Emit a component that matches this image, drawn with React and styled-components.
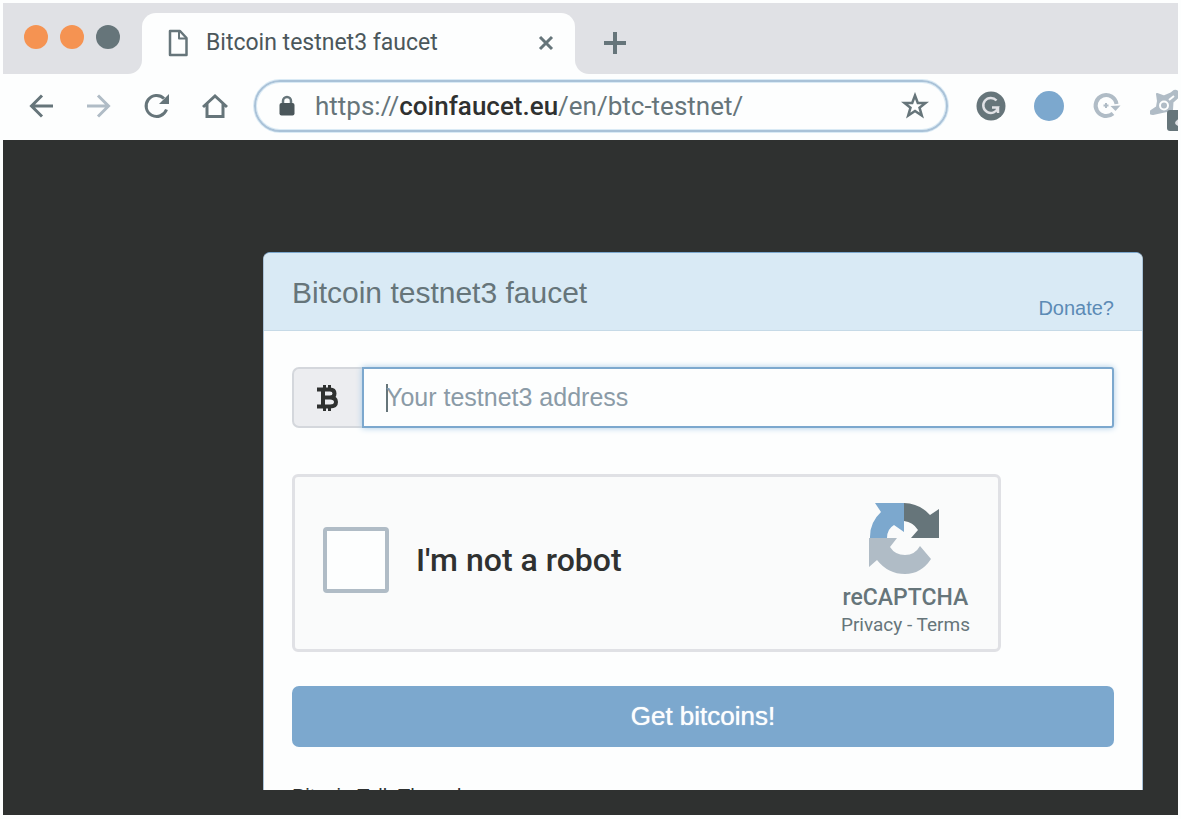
import React from 'react';
import styled, { createGlobalStyle } from 'styled-components';

const c = {
  white: '#fdfefe',
  strip: '#e0e1e5',
  dark: '#2f3130',
  slate: '#66757a',
  mist: '#b0bcc6',
  blue: '#7ca8ce',
  pale: '#d9eaf5',
  orange: '#f59352',
};

const Global = createGlobalStyle`
  *, *::before, *::after { box-sizing: border-box; }
  body { margin: 0; background: ${c.white}; font-family: "Liberation Sans", Arial, sans-serif; }
  button, input { font: inherit; }
  button { cursor: pointer; }
`;

const Browser = styled.div`
  margin: 3px;
  background: ${c.white};
  color: ${c.slate};
`;

const TabStrip = styled.div`
  display: flex;
  height: 71px;
`;

const WindowControls = styled.div`
  display: flex;
  gap: 12px;
  flex: none;
  width: 139px;
  padding: 22px 0 0 21px;
  background: ${c.strip};
  border-bottom-right-radius: 14px;
`;

const Light = styled.button`
  width: 24px;
  height: 24px;
  padding: 0;
  border: 0;
  border-radius: 50%;
  background: ${(p) => p.$color};
`;

const TabSlot = styled.div`
  flex: 0 1 433px;
  padding-top: 10px;
  background: linear-gradient(${c.strip} 40px, ${c.white} 40px);
`;

const Tab = styled.div`
  display: flex;
  align-items: center;
  height: 61px;
  padding: 0 18px 2px 25px;
  background: ${c.white};
  border-radius: 14px 14px 0 0;
`;

const TabTitle = styled.span`
  flex: 1;
  margin-left: 17px;
  white-space: nowrap;
  font: 400 23px/28px Roboto, sans-serif;
  color: #4b575b;
`;

const IconButton = styled.button`
  display: flex;
  align-items: center;
  justify-content: center;
  flex: none;
  width: ${(p) => p.$w || 58}px;
  height: 52px;
  padding: 0;
  border: 0;
  background: none;
  color: ${(p) => p.$color || c.slate};
`;

const StripRest = styled.div`
  flex: 1;
  display: flex;
  align-items: center;
  padding: 8px 0 0 20px;
  background: ${c.strip};
  border-bottom-left-radius: 14px;
`;

const Toolbar = styled.div`
  display: flex;
  align-items: center;
  height: 66px;
  padding: 0 0 2px 9px;
`;

const Nav = styled.nav`
  display: flex;
`;

const AddressBar = styled.div`
  flex: 1;
  display: flex;
  align-items: center;
  min-width: 0;
  height: 52px;
  margin: 0 14px 0 10px;
  padding: 0 12px 0 23px;
  border: 2px solid #a9c2d8;
  border-radius: 26px;
  box-shadow: inset 0 0 0 1px ${c.pale}, 0 0 0 1px ${c.pale};
`;

const Url = styled.span`
  flex: 1;
  margin-left: 20px;
  white-space: nowrap;
  font: 400 26px/32px Roboto, sans-serif;
  color: ${c.slate};

  b { font-weight: 500; color: ${c.dark}; }
`;

const Extensions = styled.div`
  display: flex;
  width: 216px;
  overflow: hidden;
`;

const Page = styled.main`
  padding: 112px 35px 25px 260px;
  background: ${c.dark};
`;

const Card = styled.section`
  background: ${c.white};
  border: 1px solid #a9c2d8;
  border-top-color: ${c.blue};
  border-bottom: 0;
  border-radius: 7px 7px 0 0;
  overflow: hidden;
`;

const CardHeader = styled.header`
  display: flex;
  justify-content: space-between;
  height: 78px;
  padding: 20px 28px 0;
  background: ${c.pale};
  border-bottom: 1px solid #c6dae7;
`;

const Title = styled.h1`
  margin: 0;
  font-size: 30px;
  line-height: 40px;
  font-weight: 400;
  color: ${c.slate};
`;

const Donate = styled.a`
  margin-top: 23px;
  font-size: 20px;
  line-height: 24px;
  color: #5c8bb5;
  text-decoration: none;
`;

const CardBody = styled.form`
  padding: 36px 28px 0;
`;

const AddressField = styled.div`
  display: flex;
  height: 61px;
`;

const Addon = styled.label`
  display: flex;
  align-items: center;
  justify-content: center;
  width: 70px;
  color: ${c.dark};
  background: #ecedf0;
  border: 2px solid #d4d7dc;
  border-right: 0;
  border-radius: 7px 0 0 7px;
`;

const AddressInput = styled.input`
  flex: 1;
  min-width: 0;
  padding: 0 22px;
  font-size: 25px;
  color: ${c.slate};
  background: linear-gradient(${c.slate}, ${c.slate}) 22px center / 2px 28px no-repeat ${c.white};
  border: 2px solid ${c.blue};
  border-radius: 0 3px 3px 0;
  box-shadow: 0 0 6px #a9cbe6;
  outline: 0;

  &:not(:placeholder-shown) { background-image: none; }
  &::placeholder { color: #8b9ba7; opacity: 1; }
`;

const Captcha = styled.div`
  display: flex;
  align-items: center;
  max-width: 709px;
  height: 178px;
  margin-top: 46px;
  padding: 0 28px 6px;
  background: #fafbfb;
  border: 3px solid ${c.strip};
  border-radius: 6px;
`;

const Check = styled.input`
  appearance: none;
  flex: none;
  width: 66px;
  height: 66px;
  margin: 0 27px 0 0;
  background: ${c.white};
  border: 4px solid ${c.mist};
  border-radius: 4px;
`;

const CheckLabel = styled.label`
  flex: 1;
  font: 500 32px/40px Roboto, sans-serif;
  color: ${c.dark};
`;

const Badge = styled.div`
  display: flex;
  flex-direction: column;
  align-items: center;
  padding-top: 20px;
  font-family: Roboto, sans-serif;
  color: ${c.slate};
  white-space: nowrap;
`;

const BadgeName = styled.span`
  margin-top: 8px;
  font-size: 23px;
  font-weight: 500;
  line-height: 30px;
`;

const BadgeLinks = styled.span`
  font-size: 19px;
  line-height: 24px;

  a { color: inherit; text-decoration: none; }
`;

const Submit = styled.button`
  display: block;
  width: 100%;
  height: 61px;
  margin-top: 34px;
  padding: 0;
  font-size: 26px;
  color: ${c.white};
  text-shadow: 0 0 1px ${c.white};
  background: ${c.blue};
  border: 0;
  border-radius: 7px;
`;

const Footer = styled.div`
  height: 2px;
  margin-top: 41px;
  overflow: hidden;
  font-size: 20px;
  line-height: 16px;

  a { color: ${c.dark}; text-decoration: none; }
`;

const Svg = ({ w, h = w, children, ...rest }) => (
  <svg width={w} height={h} viewBox={`0 0 ${w} ${h}`} fill="none" stroke="currentColor" strokeWidth="3" aria-hidden="true" {...rest}>
    {children}
  </svg>
);

const FileIcon = () => (
  <Svg w={22} h={28} strokeWidth="2.5" strokeLinejoin="round">
    <path d="M3 2H13L19.500 9V26H3Z" />
    <path d="M12 2.500V9.500H19" strokeWidth="2" />
  </Svg>
);
const CloseIcon = () => <Svg w={18}><path d="M3 3L15 15M15 3L3 15" /></Svg>;
const PlusIcon = () => <Svg w={24} strokeWidth="4"><path d="M12 1V23M1 12H23" /></Svg>;
const BackIcon = () => <Svg w={26}><path d="M25 13H4M14 2.500L3.500 13L14 23.500" /></Svg>;
const ForwardIcon = () => <Svg w={26}><path d="M1 13H22M12 2.500L22.500 13L12 23.500" /></Svg>;
const ReloadIcon = () => (
  <Svg w={28}>
    <path d="M23.500 17.500A10.500 10.500 0 1 1 21 6.500" />
    <path d="M26 2V12H16Z" fill="currentColor" stroke="none" />
  </Svg>
);
const HomeIcon = () => (
  <Svg w={26}><path d="M1 14L13 3L25 14M5 11V23.500H21V11" /></Svg>
);
const LockIcon = () => (
  <Svg w={16} h={22}>
    <path d="M4 9V6A4 4 0 0 1 12 6V9" strokeWidth="2.500" />
    <rect x="0.500" y="8" width="15" height="12.500" rx="2" fill="#4b575b" stroke="none" />
  </Svg>
);
const StarIcon = () => (
  <Svg w={28} h={28} strokeWidth="2.500">
    <path d="M14 3.500L16.800 11H24.500L18.500 15.700L20.800 23.500L14 19L7.200 23.500L9.500 15.700L3.500 11H11.200Z" />
  </Svg>
);
const GIcon = () => (
  <Svg w={30}>
    <circle cx="15" cy="15" r="14.500" fill="currentColor" stroke="none" />
    <path d="M20.500 9.500A7.500 7.500 0 1 0 22 16.500H16M22 16V22" stroke={c.strip} strokeWidth="2.500" />
  </Svg>
);
const DotIcon = () => <Svg w={30}><circle cx="15" cy="15" r="15" fill={c.blue} stroke="none" /></Svg>;
const RingIcon = () => (
  <Svg w={30}>
    <path d="M21 22.500A10.500 10.500 0 1 1 24.500 13" strokeWidth="4" />
    <path d="M18.500 15L28.500 14.500L23.500 20Z" fill="currentColor" stroke="none" />
    <path d="M14 12V17M11.500 14.500H16.500" strokeWidth="2" />
  </Svg>
);
const FoxIcon = () => (
  <Svg w={30} h={50}>
    <path d="M7 13L14 15.500L21 12.500L24 10Q28 9 28 13L27 17L22.500 21L22 29L12 31L3 33Q-1 33 1 30L7 26L8 20Z" fill="currentColor" strokeWidth="2" strokeLinejoin="round" />
    <circle cx="14" cy="24.500" r="4" stroke={c.white} strokeWidth="2" />
    <path d="M19 19L24 15" stroke={c.white} strokeWidth="2" />
    <path d="M30 29H20Q17 29 17 32V47Q17 50 20 50H30Z" fill={c.slate} stroke="none" />
    <path d="M30 37Q25 40 25 42T30 46Z" fill={c.strip} stroke="none" />
  </Svg>
);
const BitcoinIcon = () => (
  <Svg w={24} h={26} strokeWidth="4" strokeLinejoin="round">
    <path d="M1 4.500H14Q18.500 4.500 18.500 8.500T14 12.500H8M14 12.500Q20 12.500 20 17T14 21.500H1M7 5V21" />
    <path d="M8.500 0V5M13.500 0V5M8.500 21V26M13.500 21V26" strokeWidth="3" />
  </Svg>
);
const RecaptchaLogo = () => (
  <Svg w={72} h={72} stroke="none">
    <path d="M35 0H6L12 9A34 34 0 0 0 1 35H18Q18 26 25 22L35 29Z" fill={c.blue} />
    <path d="M35 0A36 36 0 0 1 61 12L70 6V35H42L49 27Q44 19 35 18Z" fill={c.slate} />
    <path d="M0 35H28L21 44Q26 52 36 52Q46 52 51 43L62 56Q52 71 36 71Q19 71 8 57L0 64Z" fill={c.mist} />
  </Svg>
);

export default function App() {
  return (
    <>
      <Global />
      <Browser>
        <TabStrip>
          <WindowControls>
            <Light $color={c.orange} aria-label="Close window" />
            <Light $color={c.orange} aria-label="Minimise window" />
            <Light $color={c.slate} aria-label="Zoom window" />
          </WindowControls>
          <TabSlot>
            <Tab>
              <FileIcon />
              <TabTitle>Bitcoin testnet3 faucet</TabTitle>
              <IconButton $w={22} aria-label="Close tab"><CloseIcon /></IconButton>
            </Tab>
          </TabSlot>
          <StripRest>
            <IconButton $w={40} aria-label="New tab"><PlusIcon /></IconButton>
          </StripRest>
        </TabStrip>
        <Toolbar>
          <Nav>
            <IconButton aria-label="Back"><BackIcon /></IconButton>
            <IconButton $color={c.mist} aria-label="Forward"><ForwardIcon /></IconButton>
            <IconButton aria-label="Reload"><ReloadIcon /></IconButton>
            <IconButton aria-label="Home"><HomeIcon /></IconButton>
          </Nav>
          <AddressBar>
            <LockIcon />
            <Url>https://<b>coinfaucet.eu</b>/en/btc-testnet/</Url>
            <IconButton $w={38} aria-label="Bookmark"><StarIcon /></IconButton>
          </AddressBar>
          <Extensions>
            <IconButton aria-label="Grammar extension"><GIcon /></IconButton>
            <IconButton aria-label="Globe extension"><DotIcon /></IconButton>
            <IconButton $color={c.mist} aria-label="Refresh extension"><RingIcon /></IconButton>
            <IconButton $color={c.mist} aria-label="Fox extension"><FoxIcon /></IconButton>
          </Extensions>
        </Toolbar>
        <Page>
          <Card>
            <CardHeader>
              <Title>Bitcoin testnet3 faucet</Title>
              <Donate href="#donate">Donate?</Donate>
            </CardHeader>
            <CardBody onSubmit={(e) => e.preventDefault()}>
              <AddressField>
                <Addon htmlFor="address" aria-label="Bitcoin address"><BitcoinIcon /></Addon>
                <AddressInput id="address" placeholder="Your testnet3 address" />
              </AddressField>
              <Captcha>
                <Check type="checkbox" id="robot" />
                <CheckLabel htmlFor="robot">I'm not a robot</CheckLabel>
                <Badge>
                  <RecaptchaLogo />
                  <BadgeName>reCAPTCHA</BadgeName>
                  <BadgeLinks><a href="#privacy">Privacy</a> - <a href="#terms">Terms</a></BadgeLinks>
                </Badge>
              </Captcha>
              <Submit type="submit">Get bitcoins!</Submit>
              <Footer><a href="#thread">Bitcoin Talk Thread</a></Footer>
            </CardBody>
          </Card>
        </Page>
      </Browser>
    </>
  );
}
